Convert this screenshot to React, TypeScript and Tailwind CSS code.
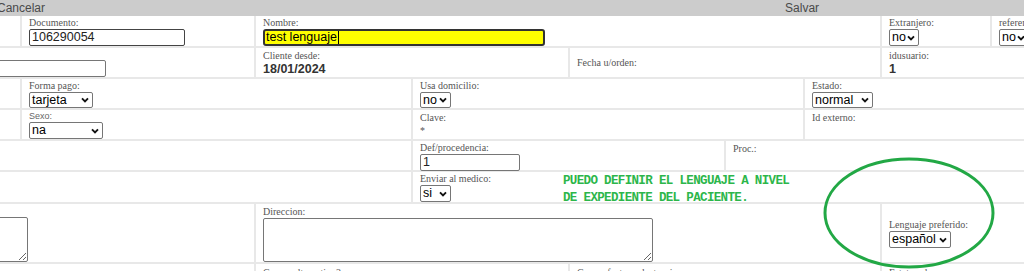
import type { ReactNode } from "react";

const SANS = "font-['Liberation_Sans',Arial,sans-serif]";

function Lbl({ children }: { children?: ReactNode }) {
  return (
    <div className="h-[13px] font-['Liberation_Serif',serif] text-[10px] leading-[13px] whitespace-nowrap text-[#555]">
      {children}
    </div>
  );
}

function Sel({ v, w }: { v: string; w: string }) {
  return (
    <div
      className={`flex h-[17px] items-center justify-between rounded-[2px] border border-[#767676] bg-white pr-[3px] pl-[2px] text-[12.5px] leading-none text-black ${w}`}
    >
      <span>{v}</span>
      <svg width="8" height="6" viewBox="0 0 8 6">
        <path d="M1 1.3 L4 4.3 L7 1.3" stroke="#111" strokeWidth="1.9" fill="none" />
      </svg>
    </div>
  );
}

function Cell({ w, first, children, top }: { w?: string; first?: boolean; children?: ReactNode; top?: boolean }) {
  return (
    <div
      className={`flex shrink-0 flex-col ${top ? "justify-start pt-[2px]" : "justify-center"} ${first ? "" : "border-l-2 border-[#e8e8e8] pl-[7px]"} ${w ?? "flex-1"}`}
    >
      {children}
    </div>
  );
}

export default function App() {
  return (
    <div className={`relative h-[271px] w-[1024px] overflow-hidden bg-white ${SANS}`}>
      {/* barra superior */}
      <div className="flex h-[16px] items-center bg-[#cccccc] text-[12px] text-[#4a4a4a]">
        <span className="ml-[-3px]">Cancelar</span>
        <span className="ml-[740px]">Salvar</span>
      </div>

      {/* fila 1 */}
      <div className="flex h-[32px] border-b-2 border-[#e8e8e8]">
        <Cell first w="w-[20px]" />
        <Cell w="w-[234px]">
          <Lbl>Documento:</Lbl>
          <input
            readOnly
            value="106290054"
            className="h-[17px] w-[156px] rounded-[2px] border border-[#444] px-[2px] text-[12.5px] text-[#222] outline-none"
          />
        </Cell>
        <Cell w="w-[626px]">
          <Lbl>Nombre:</Lbl>
          <div className="flex h-[17px] w-[282px] items-center rounded-[3px] border-2 border-[#333] bg-[#ffff00] px-[1px] text-[12.5px] text-black">
            <span>test lenguaje</span>
            <span className="ml-[1px] h-[13px] w-px bg-black" />
          </div>
        </Cell>
        <Cell w="w-[110px]">
          <Lbl>Extranjero:</Lbl>
          <Sel v="no" w="w-[30px]" />
        </Cell>
        <Cell>
          <Lbl>referencia:</Lbl>
          <Sel v="no" w="w-[30px]" />
        </Cell>
      </div>

      {/* fila 2 */}
      <div className="flex h-[31px] border-b-2 border-[#e8e8e8]">
        <Cell first w="w-[254px]">
          <Lbl />
          <input readOnly className="ml-[-60px] h-[17px] w-[166px] rounded-[2px] border border-[#767676] outline-none" />
        </Cell>
        <Cell w="w-[314px]">
          <Lbl>Cliente desde:</Lbl>
          <div className="h-[15px] text-[12.5px] leading-[15px] font-bold text-[#333]">18/01/2024</div>
        </Cell>
        <Cell w="w-[312px]">
          <Lbl>Fecha u/orden:</Lbl>
        </Cell>
        <Cell>
          <Lbl>idusuario:</Lbl>
          <div className="h-[15px] text-[12.5px] leading-[15px] font-bold text-[#333]">1</div>
        </Cell>
      </div>

      {/* fila 3 */}
      <div className="flex h-[31px] border-b-2 border-[#e8e8e8]">
        <Cell first w="w-[20px]" />
        <Cell w="w-[391px]">
          <Lbl>Forma pago:</Lbl>
          <Sel v="tarjeta" w="w-[64px]" />
        </Cell>
        <Cell w="w-[392px]">
          <Lbl>Usa domicilio:</Lbl>
          <Sel v="no" w="w-[31px]" />
        </Cell>
        <Cell>
          <Lbl>Estado:</Lbl>
          <Sel v="normal" w="w-[61px]" />
        </Cell>
      </div>

      {/* fila 4 */}
      <div className="flex h-[31px] border-b-2 border-[#e8e8e8]">
        <Cell first w="w-[20px]" />
        <Cell w="w-[391px]">
          <div className="h-[12px] text-[9px] leading-[12px] text-[#666]">Sexo:</div>
          <Sel v="na" w="w-[74px]" />
        </Cell>
        <Cell w="w-[392px]">
          <Lbl>Clave:</Lbl>
          <div className="h-[14px] font-['Liberation_Serif',serif] text-[10px] leading-[14px] text-[#555]">*</div>
        </Cell>
        <Cell>
          <Lbl>Id externo:</Lbl>
          <div className="h-[14px]" />
        </Cell>
      </div>

      {/* fila 5 */}
      <div className="flex h-[31px] border-b-2 border-[#e8e8e8]">
        <Cell first w="w-[411px]" />
        <Cell w="w-[313px]">
          <Lbl>Def/procedencia:</Lbl>
          <input
            readOnly
            value="1"
            className="h-[17px] w-[100px] rounded-[2px] border border-[#767676] px-[2px] text-[12.5px] text-[#222] outline-none"
          />
        </Cell>
        <Cell>
          <Lbl>Proc.:</Lbl>
          <div className="h-[14px]" />
        </Cell>
      </div>

      {/* fila 6 */}
      <div className="flex h-[32px] border-b-2 border-[#e8e8e8]">
        <Cell first w="w-[411px]" />
        <Cell>
          <Lbl>Enviar al medico:</Lbl>
          <Sel v="si" w="w-[31px]" />
        </Cell>
      </div>

      {/* fila 7 */}
      <div className="flex h-[60px] border-b-2 border-[#e8e8e8]">
        <Cell first w="w-[254px]">
          <Lbl />
          <textarea readOnly className="ml-[-60px] h-[46px] w-[88px] rounded-[2px] border border-[#767676] outline-none" />
        </Cell>
        <Cell w="w-[626px]">
          <Lbl>Direccion:</Lbl>
          <textarea readOnly className="h-[44px] w-[390px] rounded-[2px] border border-[#767676] outline-none" />
        </Cell>
        <Cell>
          <Lbl>Lenguaje preferido:</Lbl>
          <Sel v="español" w="w-[62px]" />
        </Cell>
      </div>

      {/* fila 8 */}
      <div className="flex h-[30px]">
        <Cell first top w="w-[254px]">
          <div className="ml-[-70px]">
            <Lbl>Correo alternativo:</Lbl>
          </div>
        </Cell>
        <Cell top w="w-[314px]">
          <Lbl>Correo alternativo2:</Lbl>
        </Cell>
        <Cell top w="w-[312px]">
          <Lbl>Correo factura electronica:</Lbl>
        </Cell>
        <Cell top>
          <Lbl>Estatus el correo:</Lbl>
        </Cell>
      </div>

      {/* anotación */}
      <div className="absolute top-[173px] left-[563px] font-['Liberation_Mono',monospace] text-[12.5px] leading-[17px] font-bold tracking-[-0.65px] whitespace-pre text-[#2cb64a]">
        {"PUEDO DEFINIR EL LENGUAJE A NIVEL\nDE EXPEDIENTE DEL PACIENTE."}
      </div>
      <svg className="absolute top-[157px] left-[823px]" width="172" height="112" viewBox="0 0 172 112">
        <ellipse cx="86" cy="56" rx="84" ry="54" fill="none" stroke="#22a845" strokeWidth="3" />
      </svg>
    </div>
  );
}
